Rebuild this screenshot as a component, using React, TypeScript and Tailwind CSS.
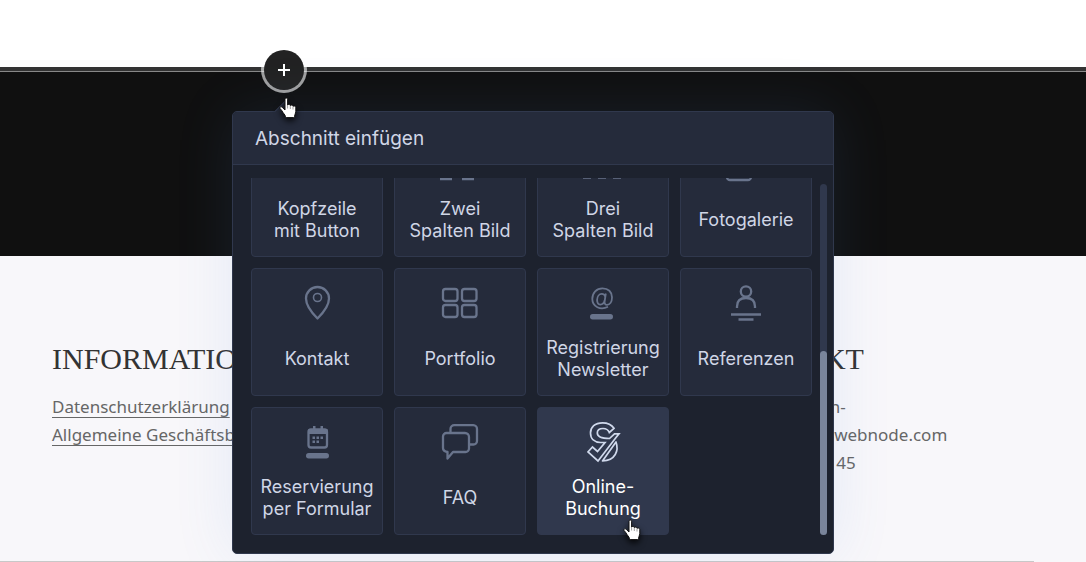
import React, { useState } from 'react';

// Line style shared by the outline icons
const line = {
  fill: 'none',
  stroke: 'currentColor',
  strokeWidth: 2.3,
  strokeLinejoin: 'round' as const,
};

interface Section {
  id: string;
  lines: string[];
  icon: React.ReactNode;
}

// Every icon is drawn on a 40x44 canvas
const sections: Section[] = [
  {
    id: 'header-button',
    lines: ['Kopfzeile', 'mit Button'],
    icon: <rect x="4" y="8" width="32" height="20" rx="2" {...line} />,
  },
  {
    id: 'two-columns',
    lines: ['Zwei', 'Spalten Bild'],
    icon: (
      <>
        <rect x="1" y="8" width="10" height="20" {...line} />
        <rect x="23" y="8" width="10" height="20" {...line} />
        <path d="M0 37h12M22 37h12" {...line} />
      </>
    ),
  },
  {
    id: 'three-columns',
    lines: ['Drei', 'Spalten Bild'],
    icon: <path d="M0 35.500h8M15 35.500h8M30 35.500h8" {...line} />,
  },
  {
    id: 'gallery',
    lines: ['Fotogalerie'],
    icon: <rect x="1" y="10" width="24" height="28" rx="3" {...line} />,
  },
  {
    id: 'contact',
    lines: ['Kontakt'],
    icon: (
      <>
        <path d="M20.500 37.500C16.500 33.500 9 25.500 9 17.500a11.500 11.500 0 0 1 23 0C32 25.500 24.500 33.500 20.500 37.500Z" {...line} />
        <circle cx="20.500" cy="16.500" r="4" {...line} strokeWidth={1.6} />
      </>
    ),
  },
  {
    id: 'portfolio',
    lines: ['Portfolio'],
    icon: (
      <>
        <rect x="3" y="8" width="14.500" height="12" rx="2.500" {...line} />
        <rect x="22" y="8" width="14.500" height="12" rx="2.500" {...line} />
        <rect x="3" y="24" width="14.500" height="12" rx="2.500" {...line} />
        <rect x="22" y="24" width="14.500" height="12" rx="2.500" {...line} />
      </>
    ),
  },
  {
    id: 'newsletter',
    lines: ['Registrierung', 'Newsletter'],
    icon: (
      <>
        <path d="M25 25.800C17.500 29.500 9.300 25.800 9.300 18 9.300 11.800 13.500 7.300 19.500 7.300c5.700 0 9.500 3.600 9.500 9 0 4.600-2.200 7.500-4.900 7.500-1.900 0-2.700-1.300-2.500-3.200L22.800 12.500M22.300 15.800c-.6-2-1.800-2.900-3.400-2.900-2.800 0-4.800 2.800-4.800 6.200 0 2.900 1.200 4.500 3.200 4.500 2.200 0 3.800-1.900 4.400-4.500" {...line} strokeWidth={1.8} />
        <rect x="7" y="33" width="23" height="5.500" rx="2.700" fill="currentColor" />
      </>
    ),
  },
  {
    id: 'references',
    lines: ['Referenzen'],
    icon: (
      <>
        <circle cx="20" cy="10.500" r="5.200" {...line} />
        <path d="M11 27v-1.500c0-5.500 3.500-8.500 9-8.500s9 3 9 8.500V27" {...line} />
        <path d="M5 33.500h30M12.500 38.500h15" {...line} strokeWidth={2.5} />
      </>
    ),
  },
  {
    id: 'booking-form',
    lines: ['Reservierung', 'per Formular'],
    icon: (
      <>
        <rect x="11.500" y="9.500" width="18.500" height="18" rx="2.500" {...line} />
        <path d="M11.500 9h19v5h-19zM16 6h2.500v4H16zM23.500 6H26v4h-2.500z" fill="currentColor" />
        <path d="M15.500 16.500H18V19h-2.500zM19.500 16.500H22V19h-2.500zM23.500 16.500H26V19h-2.500zM15.500 20.500H18V23h-2.500zM19.500 20.500H22V23h-2.500z" fill="currentColor" />
        <rect x="9" y="33" width="23" height="5.500" rx="2.700" fill="currentColor" />
      </>
    ),
  },
  {
    id: 'faq',
    lines: ['FAQ'],
    icon: (
      <>
        <path d="M6.500 13H25a4 4 0 0 1 4 4v11.500a3.500 3.500 0 0 1-3.500 3.500H13L7.500 38.500V32C4.500 31.500 3 30 3 28V16.500A3.500 3.500 0 0 1 6.500 13Z" {...line} />
        <path d="M10.500 12V9A3.800 3.800 0 0 1 14.300 5.200h19A3.800 3.800 0 0 1 37 9v12a3.500 3.500 0 0 1-3.500 3.500H30" {...line} />
      </>
    ),
  },
  {
    id: 'online-booking',
    lines: ['Online-', 'Buchung'],
    icon: (
      <>
        <path d="M26.300 12.500L31 8.300C28.500 4.500 24.500 2.800 19.500 2.800 12 2.800 7.500 7 7.500 13c0 6 4 9.500 10 9.500h4.500L14.500 31.500 9.500 27 5 32l10 9L33 17.500 36 13.800H31.500L26.500 18.500C20 18.500 14.300 17.500 14.300 13 14.300 10.300 16.500 8.500 20 8.500c3.500 0 5.300 1.500 6.300 4Z" {...line} strokeWidth={1.7} strokeLinejoin="miter" />
        <path d="M33 22C36 30.500 32.500 40.500 19.500 41Z" {...line} strokeWidth={1.7} />
      </>
    ),
  },
];

function HandPointer() {
  return (
    <svg className="h-6 w-5 drop-shadow-[0_3px_3px_rgba(0,0,0,0.8)]" viewBox="0 0 20 24" aria-hidden="true">
      <path
        d="M6 2.200c0-1.600 2.600-1.600 2.600 0v6c.4-1.300 2.700-1 2.700.4.600-1 2.700-.6 2.700.8.700-.8 2.800-.4 2.800 1.200v4.200c0 1.600-1.300 3-1.300 4.800 0 .7-.3 1-1 1H7.700c-.7 0-1-.4-1.200-1.100-.5-1.900-2.300-3.200-3.700-5.900L1 11.400c-.5-1.500 1.200-2.100 2.200-1.100L6 13Z"
        fill="#fff"
        stroke="#111"
        strokeWidth="1"
      />
      <path d="M8.600 8.500v3M11.300 9v3M14 10v2.500" stroke="#777" strokeWidth="0.7" />
    </svg>
  );
}

function InsertPanel() {
  const [active, setActive] = useState('online-booking');

  return (
    <div
      role="dialog"
      aria-labelledby="insert-title"
      className="absolute left-[232px] top-[111px] w-[602px] rounded-[5px] border border-[#30384d] bg-[#1d222e] font-['Inter','Liberation_Sans',sans-serif] text-[#d0d6e6] shadow-[0_0_60px_rgba(80,140,220,0.12)]"
    >
      {/* arrow towards the plus button */}
      <div className="absolute -top-2 left-11 h-4 w-4 rotate-45 border-l border-t border-[#30384d] bg-[#252b3b]" />

      <h2
        id="insert-title"
        className="relative rounded-t border-b border-[#30384d] bg-[#252b3b] px-[22px] pb-[11px] pt-[13px] text-[19px] leading-7"
      >
        Abschnitt einfügen
      </h2>

      <div className="flex gap-2 pb-[18px] pl-[18px] pr-[6px] pt-[13px]">
        {/* scrolled down to the last row */}
        <div className="flex h-[357px] flex-1 flex-col justify-end overflow-hidden">
          <div className="grid grid-cols-4 gap-[11px]">
            {sections.map((section) => (
              <button
                key={section.id}
                type="button"
                onClick={() => setActive(section.id)}
                className={
                  section.id === active
                    ? 'flex h-32 flex-col items-center rounded border border-[#30384d] bg-[#30384d] pt-3 text-lg leading-[22px] text-white'
                    : 'flex h-32 flex-col items-center rounded border border-[#30384d] bg-[#252b3b] pt-3 text-lg leading-[22px]'
                }
              >
                <svg
                  viewBox="0 0 40 44"
                  aria-hidden="true"
                  className={section.id === active ? 'h-11 w-10 shrink-0 text-[#d0d9ec]' : 'h-11 w-10 shrink-0 text-[#69748c]'}
                >
                  {section.icon}
                </svg>
                <span className="flex h-[68px] flex-col items-center justify-center whitespace-nowrap">
                  {section.lines.map((text) => (
                    <span key={text}>{text}</span>
                  ))}
                </span>
              </button>
            ))}
          </div>
        </div>

        {/* scrollbar */}
        <div className="mt-[6px] flex w-[7px] flex-col justify-end rounded-full bg-[#30384d]">
          <div className="h-[184px] rounded-full bg-[#7a859b]" />
        </div>
      </div>
    </div>
  );
}

export default function App() {
  return (
    <div className="relative overflow-hidden bg-white font-['Noto_Sans','Open_Sans',sans-serif] text-[17px] leading-7 text-[#666]">
      <div className="h-[67px]" />
      <section className="relative h-[189px] border-t-4 border-[#333] bg-[#101010]">
        <div className="h-px bg-[#888]" />
        <button
          type="button"
          aria-label="Abschnitt hinzufügen"
          className="absolute -top-[21px] left-[264px] flex h-10 w-10 items-center justify-center rounded-full bg-[#222] text-white ring-[3px] ring-white/60"
        >
          <svg className="h-3 w-3" viewBox="0 0 12 12" aria-hidden="true">
            <path d="M6 0v12M0 6h12" stroke="currentColor" strokeWidth="2" />
          </svg>
        </button>
      </section>

      <footer className="bg-[#f8f7fa]">
        <div className="grid grid-cols-3 gap-[22px] px-[52px] pb-[84px] pt-[83px]">
          <div>
            <h3 className="mb-3.5 font-['Liberation_Serif',serif] text-3xl leading-10 text-[#333]">INFORMATIONEN</h3>
            <ul className="whitespace-nowrap">
              <li>
                <a href="#datenschutz" className="underline decoration-1 underline-offset-4">Datenschutzerklärung</a>
              </li>
              <li>
                <a href="#agb" className="underline decoration-1 underline-offset-4">Allgemeine Geschäftsbedingungen</a>
              </li>
            </ul>
          </div>
          <div className="col-start-3">
            <h3 className="mb-3.5 font-['Liberation_Serif',serif] text-3xl leading-10 text-[#333]">KONTAKT</h3>
            <address className="whitespace-nowrap not-italic">
              <p>kontakt@salon-</p>
              <p>hochzeitsfoto.webnode.com</p>
              <p>+49 12 34 567 45</p>
            </address>
          </div>
        </div>
        <hr className="mr-[52px] border-[#c8c8c8]" />
      </footer>

      <InsertPanel />

      {/* mouse pointers */}
      <div className="pointer-events-none absolute left-[279px] top-[97px]">
        <HandPointer />
      </div>
      <div className="pointer-events-none absolute left-[623px] top-[519px]">
        <HandPointer />
      </div>
    </div>
  );
}
